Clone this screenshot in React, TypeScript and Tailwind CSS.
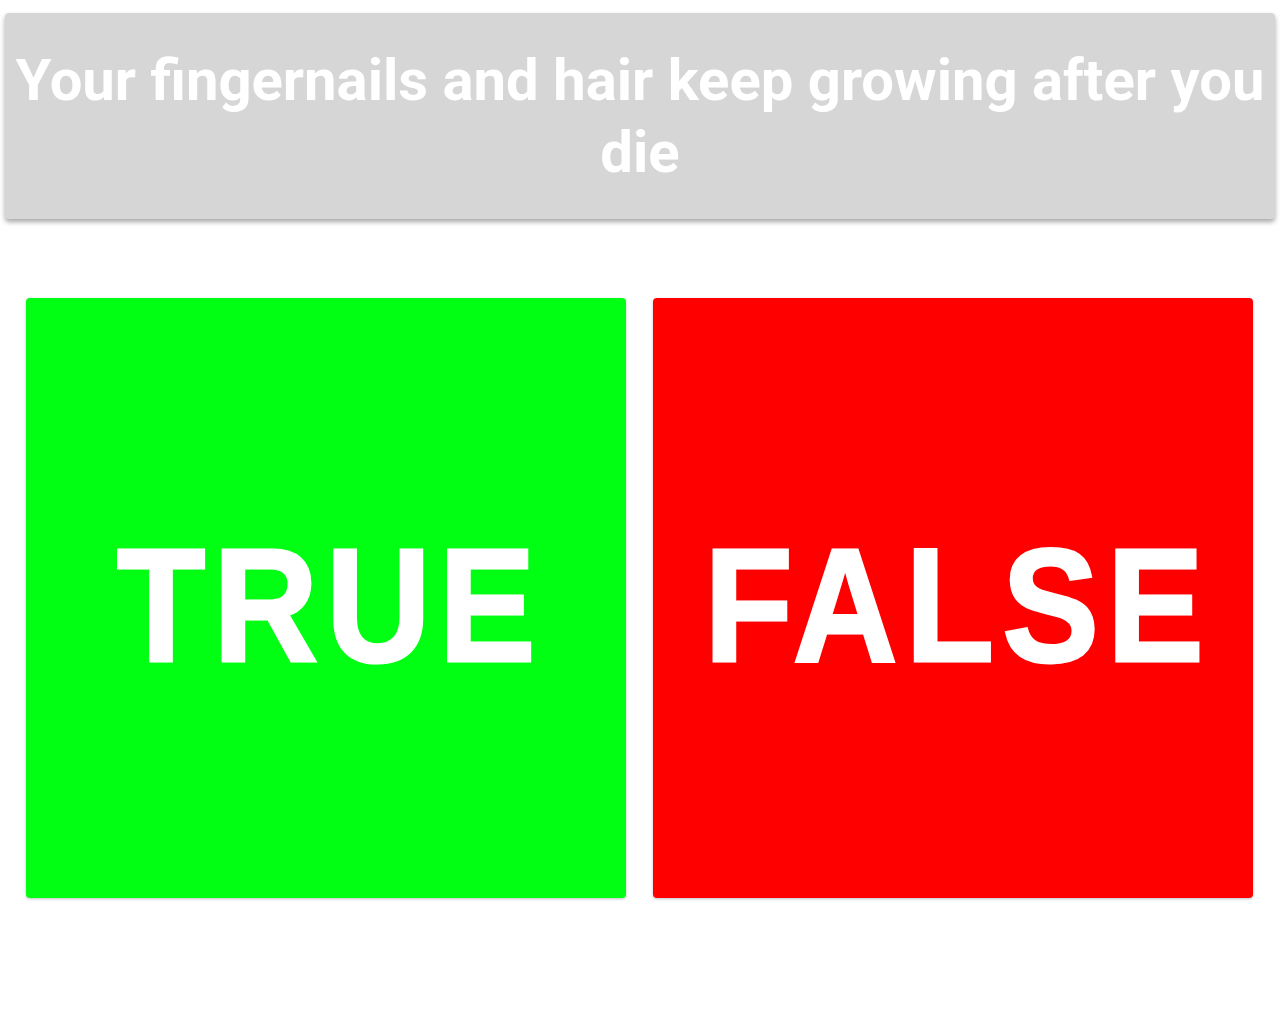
import React from 'react';

const AnswerCard: React.FC<{ label: string; color: string }> = ({ label, color }) => (
  <div
    role="button"
    className={`${color} w-[600px] h-[600px] rounded-[4px] shadow-[0_1px_3px_rgba(0,0,0,0.25)] flex items-center justify-center cursor-pointer pt-[14px]`}
  >
    {/* extra stroke + narrower glyphs give the heavier Helvetica-style look */}
    <span className="text-white font-bold text-[161px] leading-none tracking-[9px] ml-[9px] scale-x-[0.9] [-webkit-text-stroke:3px_white] font-['Liberation_Sans',Arial,sans-serif]">
      {label}
    </span>
  </div>
);

const App: React.FC = () => {
  const question = 'Your fingernails and hair keep growing after you die';

  return (
    <div className="w-[1280px] h-[1024px] bg-white">
      <div className="pt-[13px] px-[5px]">
        <div className="bg-[#d6d6d6] rounded-[4px] shadow-[0_3px_5px_rgba(0,0,0,0.35)] h-[206px] flex items-center justify-center px-[8px]">
          <h1 className="text-white font-bold text-[58px] leading-[72px] text-center font-['Roboto','Liberation_Sans',sans-serif]">
            {question}
          </h1>
        </div>
      </div>

      {/* answer buttons */}
      <div className="flex gap-[27px] pl-[26px] pt-[79px]">
        <AnswerCard label="TRUE" color="bg-[#00ff12]" />
        <AnswerCard label="FALSE" color="bg-[#ff0000]" />
      </div>
    </div>
  );
};

export default App;
